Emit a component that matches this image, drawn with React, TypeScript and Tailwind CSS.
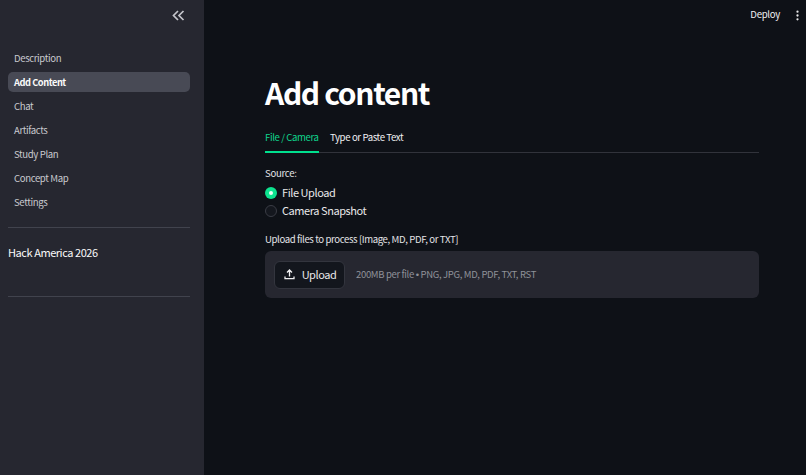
import { MoreVertical } from "lucide-react";

const nav = ["Description", "Add Content", "Chat", "Artifacts", "Study Plan", "Concept Map", "Settings"];
const font = { fontFamily: '"Noto Sans CJK SC", sans-serif' };

export default function App() {
  return (
    <div className="flex h-[475px] w-[806px] overflow-hidden bg-[#0e1117] text-[#fafafa]" style={font}>
      <aside className="flex h-full w-[204px] shrink-0 flex-col bg-[#262730] pl-2 pr-[14px]">
        <div className="flex h-[30px] items-center justify-end pr-[5px]">
          <svg width="13" height="11" viewBox="0 0 13 11" fill="none" stroke="#c4c5cb" strokeWidth="1.7">
            <path d="M6 1 1.500 5.500 6 10" />
            <path d="M11.500 1 7 5.500 11.500 10" />
          </svg>
        </div>
        <nav className="mt-[18px] flex flex-col gap-1">
          {nav.map((n) => (
            <div
              key={n}
              className={
                n === "Add Content"
                  ? "flex h-5 items-center rounded-[5px] bg-[#484a55] px-[6px] pt-px text-[9.3px] leading-none font-bold tracking-[-0.05em] text-[#fafafa]"
                  : "flex h-5 items-center rounded-[5px] px-[6px] pt-px text-[9.6px] leading-none tracking-[-0.04em] text-[#c9cacf]"
              }
            >
              {n}
            </div>
          ))}
        </nav>
        <div className="mt-[15px] h-px bg-[#41434d]" />
        <div className="mt-[16px] text-[11px] leading-[17px] tracking-[-0.04em] text-[#fafafa]">Hack America 2026</div>
        <div className="mt-[35px] h-px bg-[#41434d]" />
      </aside>
      <main className="flex min-w-0 flex-1 flex-col">
        <header className="flex h-[30px] items-center justify-end">
          <span className="text-[9.6px] leading-none tracking-[-0.03em] text-[#f0f0f2]">Deploy</span>
          <MoreVertical className="ml-[11px] mr-[2px] h-[13px] w-[13px] text-[#e8e8ea]" strokeWidth={2.2} />
        </header>
        <div className="mt-[41px] pl-[61px] pr-[47px]">
          <h1 className="text-[30px] leading-[42px] font-bold tracking-[-0.045em] text-white">Add content</h1>
          <div className="mt-[10px] flex h-[30px] gap-[11px] border-b border-[#31333b]">
            <div className="flex h-[30px] w-[54px] items-center border-b-2 border-[#00e08e] pt-[2px] text-[9.6px] leading-none tracking-[-0.04em] whitespace-nowrap text-[#0fd58d]">File / Camera</div>
            <div className="flex h-[29px] items-center text-[9.6px] leading-none tracking-[-0.04em] whitespace-nowrap text-[#f0f0f2]">Type or Paste Text</div>
          </div>
          <div className="mt-[13px] text-[9.6px] leading-[14px] tracking-[-0.03em] text-[#e4e4e7]">Source:</div>
          <div className="mt-[6px] flex flex-col gap-[5px]">
            <div className="flex h-[13px] items-center gap-[5px]">
              <span className="flex h-3 w-3 items-center justify-center rounded-full bg-[#0de38f]">
                <span className="h-1 w-1 rounded-full bg-[#eafff5]" />
              </span>
              <span className="text-[11px] leading-none tracking-[-0.04em] text-[#e8e8ea]">File Upload</span>
            </div>
            <div className="flex h-[13px] items-center gap-[5px]">
              <span className="h-3 w-3 rounded-full border border-[#3a3c45] bg-[#14171e]" />
              <span className="text-[11px] leading-none tracking-[-0.04em] text-[#e8e8ea]">Camera Snapshot</span>
            </div>
          </div>
          <div className="mt-[15px] text-[9.6px] leading-[14px] tracking-[-0.04em] text-[#e4e4e7]">Upload files to process [Image, MD, PDF, or TXT]</div>
          <div className="mt-[5px] flex h-[47px] items-center gap-[11px] rounded-[6px] bg-[#262730] pl-[9px]">
            <div className="flex h-[28px] w-[71px] items-center justify-center gap-[7px] rounded-[6px] border border-[#33353e] bg-[#13161d] pl-px">
              <svg width="11" height="11" viewBox="0 0 11 11" fill="none" stroke="#f0f0f2" strokeWidth="1.3">
                <path d="M5.500 7.500V1.200M3 3.500 5.500 1l2.500 2.500M1 7.500v2.200h9V7.500" />
              </svg>
              <span className="text-[11px] leading-none tracking-[-0.04em] text-[#e8e8ea]">Upload</span>
            </div>
            <span className="text-[9.5px] leading-none tracking-[-0.035em] text-[#8f9199]">
              200MB per file <span className="font-['Liberation_Sans',sans-serif]">•</span> PNG, JPG, MD, PDF, TXT, RST
            </span>
          </div>
        </div>
      </main>
    </div>
  );
}
